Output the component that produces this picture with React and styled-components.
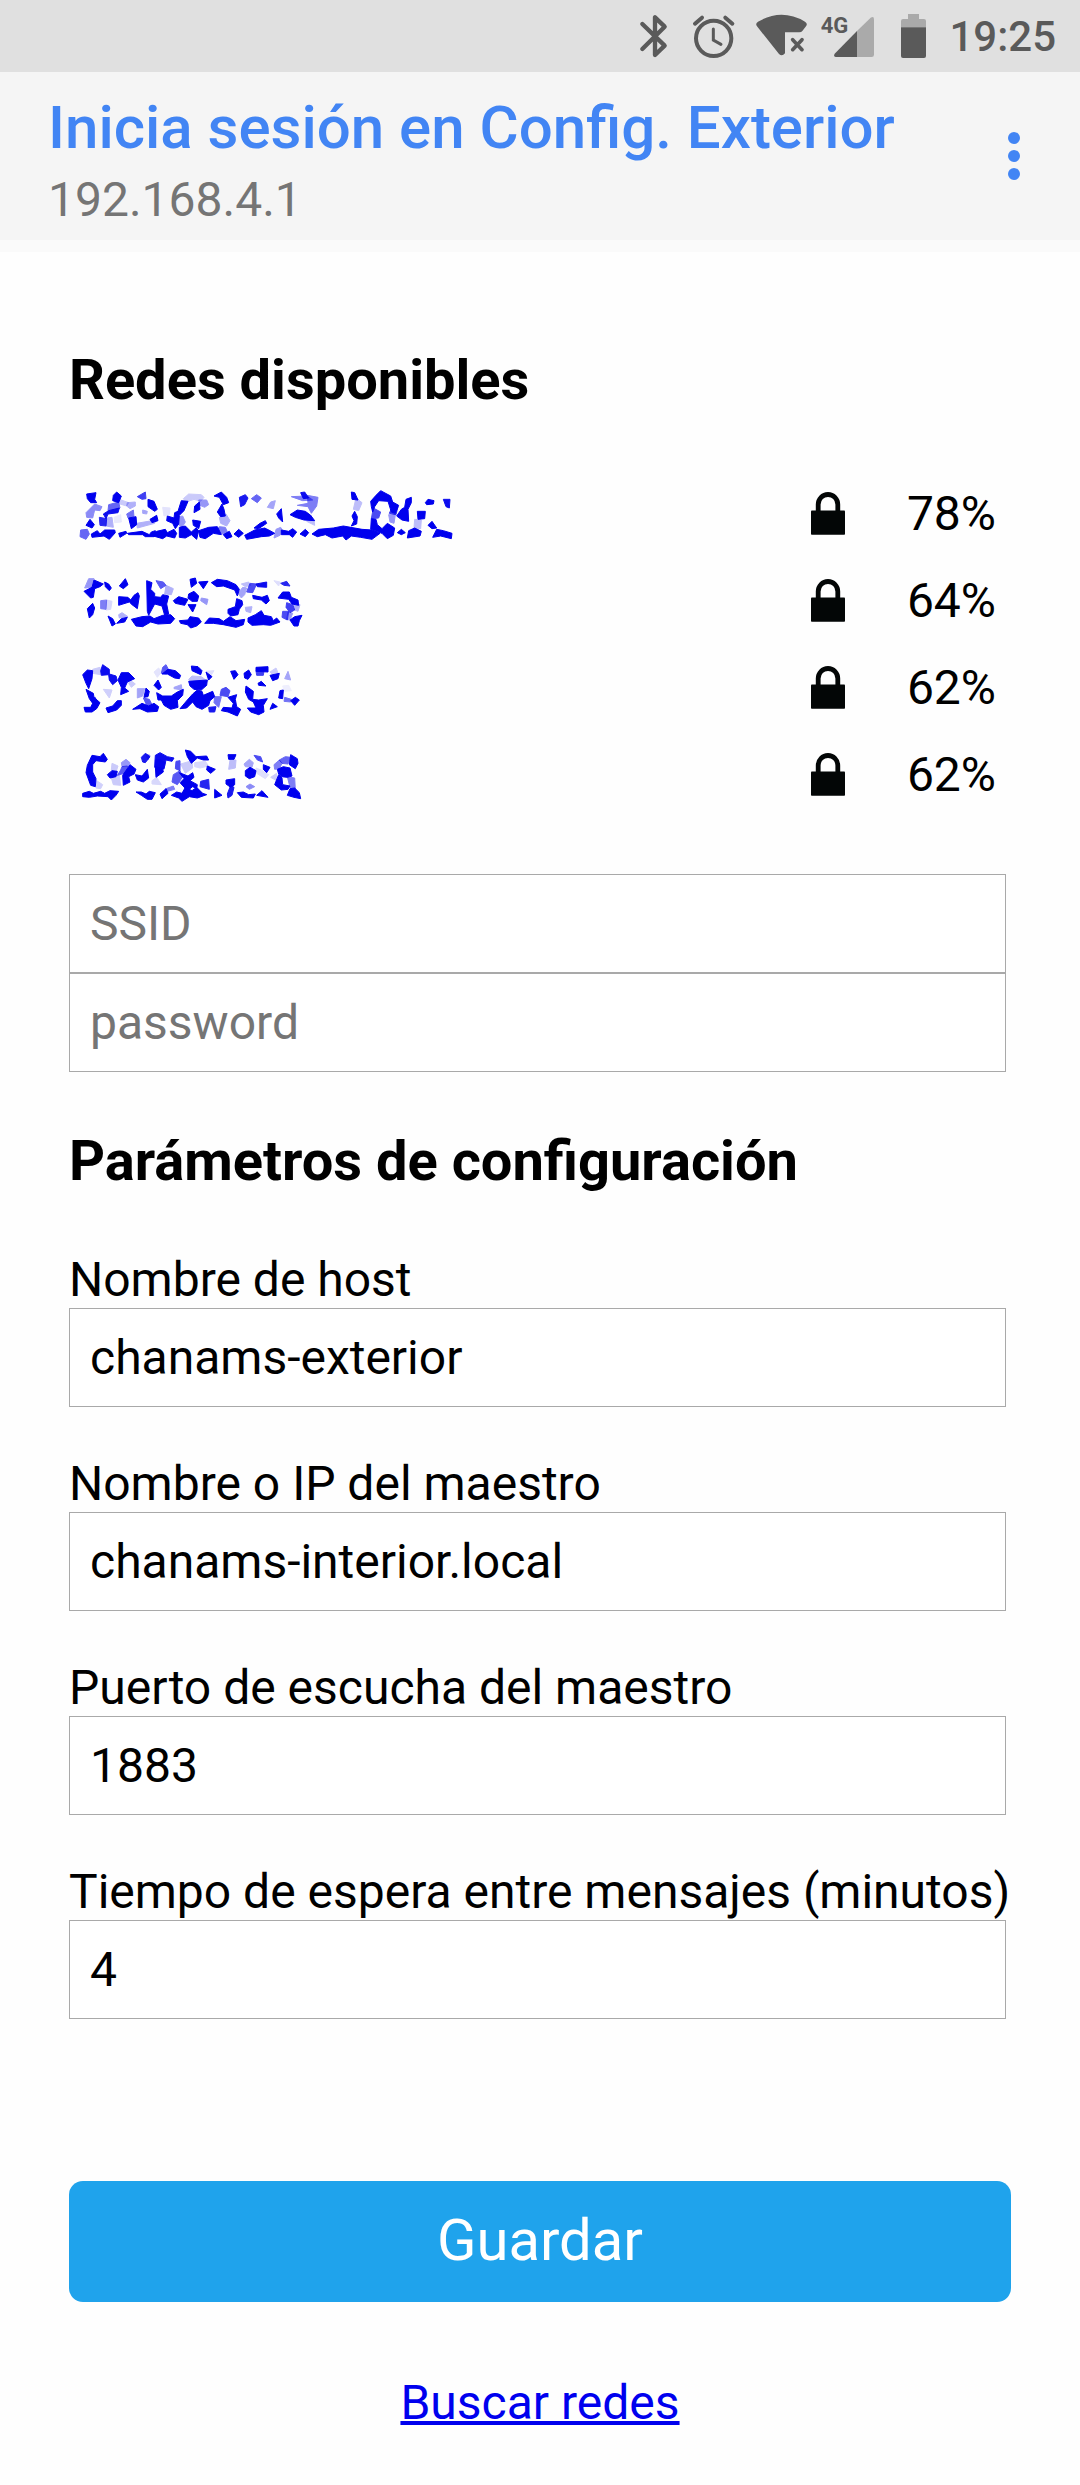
import React from "react";
import styled, { createGlobalStyle } from "styled-components";

const GlobalStyle = createGlobalStyle`
  *, *::before, *::after { box-sizing: border-box; }
  body {
    margin: 0;
    background: #fefefe;
    color: #000;
    font-family: Roboto, "Liberation Sans", sans-serif;
    font-size: 48px;
    line-height: 57px;
  }
`;

const StatusBar = styled.div`
  display: flex;
  align-items: center;
  justify-content: flex-end;
  gap: 12px;
  height: 72px;
  padding-right: 24px;
  background: #e0e0e0;
  color: #5a5a5a;
`;

const StatusIcon = styled.svg`
  flex: none;
  height: 72px;
  fill: currentColor;
`;

const Clock = styled.time`
  padding-top: 2px;
  font-size: 42px;
  font-weight: 500;
  line-height: 50px;
`;

const AppBar = styled.header`
  display: flex;
  align-items: center;
  justify-content: space-between;
  height: 180px;
  padding: 0 42px 0 48px;
  background: #f5f5f5;
  border-bottom: 12px solid #fafafa;
`;

const Titles = styled.div`
  display: flex;
  flex-direction: column;
  gap: 8px;
  padding-top: 8px;
`;

const Title = styled.h1`
  margin: 0;
  color: #4285f4;
  font-size: 60px;
  font-weight: 500;
  line-height: 70px;
`;

const Address = styled.span`
  color: #757575;
`;

const MenuButton = styled.button`
  display: flex;
  flex-direction: column;
  align-items: center;
  gap: 6px;
  width: 48px;
  padding: 24px 0;
  border: 0;
  background: none;
`;

const Dot = styled.span`
  width: 12px;
  height: 12px;
  border-radius: 50%;
  background: #4285f4;
`;

const Page = styled.main`
  display: flex;
  flex-direction: column;
  gap: 56px;
  padding: 95px 69px 54px;
`;

const Heading = styled.h2`
  margin: 0;
  font-size: 56px;
  font-weight: 700;
  line-height: 67px;
`;

const NetworkList = styled.ul`
  margin: 0;
  padding: 0;
  list-style: none;
`;

const NetworkRow = styled.li`
  display: flex;
  align-items: center;
  height: 87px;
  padding-right: 15px;
`;

const NetworkLink = styled.a`
  display: block;
  height: 87px;
  margin-right: auto;
  color: #0000ee;
`;

const Mosaic = styled.svg`
  display: block;
  width: 391px;
  height: 87px;
  fill: currentColor;
  stroke: currentColor;
  stroke-width: 3;
  stroke-linejoin: round;
`;

const LockIcon = styled.svg`
  width: 34px;
  height: 43px;
  margin-right: 62px;
`;

const Form = styled.form`
  display: flex;
  flex-direction: column;
  gap: 56px;
`;

const Fields = styled.div`
  display: flex;
  flex-direction: column;
  gap: ${(p) => p.$gap}px;
  padding-right: 5px;
`;

const Field = styled.div`
  display: flex;
  flex-direction: column;
`;

const Label = styled.label`
  white-space: nowrap;
`;

const Input = styled.input`
  width: 100%;
  height: 99px;
  padding: 0 20px;
  border: 1px solid #a9a9a9;
  border-radius: 0;
  background: #fff;
  color: #000;
  font: inherit;

  &::placeholder {
    color: #757575;
    opacity: 1;
  }
`;

const Actions = styled.div`
  display: flex;
  flex-direction: column;
  align-items: center;
  gap: 72px;
  padding-top: 106px;
`;

const SaveButton = styled.button`
  width: 100%;
  height: 121px;
  padding: 0 0 2px;
  border: 0;
  border-radius: 14px;
  background: #1fa3ec;
  color: #fff;
  font-family: inherit;
  font-size: 58px;
  line-height: 115px;
`;

const ScanLink = styled.a`
  color: #0000ee;
  text-decoration-thickness: 4px;
`;

/* Shards of each scrambled network name: [points, opacity]. */
const networks = [
  {
    id: "red-1",
    signal: 78,
    top: 0,
    shards: [
      ["80,72 108,68 104,88 110,98 92,98 82,86", 1],
      ["104,102 126,110 120,122 104,120 98,144 80,142 78,128", 0.45],
      ["90,148 103,164 96,174 78,166", 1],
      ["62,180 82,178 88,192 78,208 60,200", 0.6],
      ["94,192 112,182 120,192 134,180 164,180 166,188 148,208 132,198 96,202", 1],
      ["118,142 140,146 138,168 120,166", 0.85],
      ["140,144 156,142 160,172 138,168", 0.3],
      ["170,66 184,78 176,98 158,92 160,76", 1],
      ["146,104 176,96 180,114 144,122", 0.6],
      ["146,122 178,114 174,128 144,132 138,146 130,132", 0.95],
      ["178,88 206,98 200,108 180,102", 0.2],
      ["162,142 182,134 184,156 164,158", 0.08],
      ["176,190 198,184 200,190 180,202", 1],
      ["232,80 256,66 258,86 246,88", 0.75],
      ["202,98 226,96 226,108 210,116 200,108", 0.3],
      ["200,132 220,120 222,140 204,144", 0.55],
      ["206,144 228,140 230,164 214,176", 1],
      ["230,160 288,150 284,160 232,174", 0.3],
      ["202,190 246,184 268,194 274,186 286,182 292,192 282,200 256,200 248,194 206,194", 1],
      ["264,88 282,94 292,118 284,124 264,110", 1],
      ["270,148 290,136 294,152 276,158", 1],
      ["248,120 262,124 260,132 248,130", 0.35],
      ["308,112 330,114 328,134 312,138", 0.1],
      ["364,92 384,94 372,122 358,136 356,162 346,176 338,160 320,152 322,138 342,144 344,128 354,124", 1],
      ["356,140 368,138 376,156 366,172 354,162", 0.4],
      ["280,198 290,184 316,178 322,188 342,178 350,190 344,204 320,198 308,206", 1],
      ["370,86 386,72 424,74 432,82 422,94 402,88 378,96", 0.2],
      ["416,90 440,90 446,104 434,112 420,106", 0.4],
      ["404,108 418,96 420,118 402,128", 1],
      ["398,150 422,154 416,176 400,166", 1],
      ["358,172 376,168 394,186 408,174 416,182 410,208 394,194 376,204 358,202", 1],
      ["416,182 446,172 472,170 484,194 460,190 436,206 420,202", 1],
      ["462,78 484,66 500,82 506,98 490,104 478,82", 1],
      ["486,102 492,118 496,138 482,140 472,126", 1],
      ["478,142 498,132 510,152 500,168 482,160", 0.3],
      ["478,170 496,172 504,190 492,192 470,188", 0.5],
      ["490,194 508,184 516,200 500,206", 1],
      ["538,82 556,74 564,84 554,104 542,110", 0.9],
      ["574,86 590,74 604,84 592,98", 0.6],
      ["522,192 536,178 550,190 536,202", 1],
      ["616,152 620,160 596,176 582,174 600,160", 1],
      ["554,196 584,180 614,174 630,182 644,190 628,198 604,200 560,208", 1],
      ["632,96 646,92 640,116 622,112", 0.35],
      ["650,132 664,116 668,156 656,144", 1],
      ["648,178 662,172 668,182 660,196 642,204", 0.4],
      ["664,180 686,184 698,176 710,186 698,202 688,194 664,194", 1],
      ["690,134 712,120 736,124 752,136 764,152 732,150 706,142", 1],
      ["694,80 742,78 758,90 728,92", 0.5],
      ["722,68 734,66 746,84 730,86", 0.95],
      ["742,76 774,82 770,108 754,130 744,110 712,106 744,100", 0.5],
      ["740,154 762,150 764,166", 0.25],
      ["720,192 736,178 746,188 736,200", 1],
      ["756,192 776,178 820,174 850,168 906,178 936,180 960,190 936,208 902,202 874,198 858,210 848,198 816,204 796,194 772,200", 1],
      ["874,66 884,68 894,90 876,88", 1],
      ["888,84 906,98 896,122 880,118", 0.25],
      ["884,124 892,140 890,162 874,168 882,152 876,138", 1],
      ["932,94 948,76 962,62 992,78 998,96 1016,106 1006,130 994,126 984,94 956,92 944,110 938,126 934,110", 1],
      ["940,114 962,126 956,144 934,146", 0.7],
      ["934,146 948,148 952,164 966,176 982,160 1004,174 1000,196 982,206 966,190 932,178", 1],
      ["1000,104 1014,110 1008,134 988,130", 0.8],
      ["986,134 1006,134 1002,160 990,156", 0.4],
      ["1038,88 1054,82 1054,98 1044,118 1046,154 1026,150 1010,138 1024,118 1034,112", 1],
      ["1072,124 1096,124 1094,146 1074,148", 1],
      ["1064,148 1084,150 1082,176 1062,174", 0.25],
      ["1096,98 1104,88 1122,92 1120,102 1100,104", 1],
      ["1150,88 1170,88 1168,114 1158,110", 0.95],
      ["1012,188 1024,178 1036,188 1024,194", 1],
      ["1046,182 1064,174 1084,184 1080,198 1042,204", 1],
      ["1104,166 1116,154 1130,174 1116,176", 1],
      ["1130,178 1150,182 1176,190 1174,206 1142,198 1118,202", 1],
    ],
  },
  {
    id: "red-2",
    signal: 64,
    top: 261,
    shards: [
      ["86,326 102,326 96,352 74,354", 0.4],
      ["102,330 130,342 120,350 104,356 100,382 92,384 72,364 96,352", 1],
      ["98,400 104,414 98,434 88,444 82,416", 1],
      ["134,336 146,342 154,354 148,362 136,350", 1],
      ["122,392 140,390 138,418 122,416", 0.5],
      ["140,390 156,394 152,418 138,420", 0.15],
      ["176,434 186,428 204,440 178,444", 0.3],
      ["144,438 158,446 166,462 156,468", 1],
      ["196,326 204,344 190,356 178,348", 1],
      ["176,380 204,382 212,390 222,376 234,368 238,378 232,416 216,404 208,396 176,406", 1],
      ["170,460 184,446 202,442 194,456", 1],
      ["260,332 276,338 272,358 284,370 284,380 302,382 308,374 326,378 320,402 326,432 314,436 306,408 284,402 266,436 262,424", 1],
      ["288,332 310,336 318,346 302,356", 0.65],
      ["318,346 340,356 334,374 314,372", 0.3],
      ["214,448 246,440 270,438 282,446 308,436 332,434 344,446 332,460 294,462 272,456 248,470 228,468", 1],
      ["340,392 356,380 384,388 374,406 346,400", 1],
      ["390,328 406,324 410,340 394,352", 1],
      ["416,336 444,334 430,356", 1],
      ["386,372 402,364 416,378 412,394 396,394 384,384", 1],
      ["424,384 444,388 440,404 422,392", 0.4],
      ["384,404 408,404 398,426", 1],
      ["358,452 384,450 390,440 416,444 424,456 410,468 392,474 382,464 362,460", 1],
      ["454,338 472,328 502,332 528,344 538,358 532,378 524,360 490,348 470,350", 1],
      ["530,386 546,392 548,404 538,418 534,434 512,438 504,430 504,418 526,410", 1],
      ["534,370 548,352 560,354 554,374 544,384", 0.35],
      ["434,460 448,444 478,446 490,454 510,440 528,452 554,448 550,464 528,472 490,464 460,460", 1],
      ["570,340 590,342 578,368 560,366", 0.7],
      ["588,342 620,336 620,352 592,350", 0.95],
      ["544,342 566,336 572,346 556,350", 0.25],
      ["578,376 606,382 622,376 628,392 618,402 604,390 580,386", 1],
      ["556,412 576,410 572,428 558,424", 0.3],
      ["604,422 612,436 634,440 640,452 650,444 660,456 632,466 610,464 576,466 564,456 564,444 586,434", 1],
      ["642,332 660,336 656,348", 0.12],
      ["662,340 680,334 690,348 672,346", 0.85],
      ["654,384 668,366 688,366 694,382 714,390 716,406 696,402 686,388", 1],
      ["680,398 698,404 704,420 690,428 678,412", 0.75],
      ["700,406 720,404 714,424 704,420", 0.3],
      ["668,424 686,424 682,450 666,442", 0.7],
      ["684,426 698,430 690,450 680,448", 0.4],
      ["690,450 704,440 726,436 718,452 714,468 702,468", 1],
    ],
  },
  {
    id: "red-3",
    signal: 62,
    top: 12,
    shards: [
      ["68,104 82,90 98,92 96,116 86,146 78,130", 1],
      ["98,88 120,82 122,104 98,100", 0.2],
      ["122,92 128,74 148,88 148,102 168,108 172,122 158,134 148,120 146,104 124,106", 0.95],
      ["78,148 100,160 102,172 120,188 110,206 96,216 76,216 72,202 92,202 98,190 88,176", 1],
      ["92,174 106,172 112,190 100,194", 0.65],
      ["130,148 156,150 148,174", 0.18],
      ["138,204 158,198 172,182 184,182 184,196 170,210 144,218", 1],
      ["174,120 184,98 206,98 224,116 202,126 194,144 206,154 182,164 184,142", 1],
      ["210,120 226,132 214,142 206,130", 0.2],
      ["232,146 254,146 248,168 232,174", 0.35],
      ["258,144 268,154 264,170 252,172", 1],
      ["250,174 268,178 276,194 264,204", 0.65],
      ["218,208 246,190 266,198 282,190 296,200 292,214 262,216 240,206", 1],
      ["282,96 296,84 304,96 292,112", 0.1],
      ["308,82 318,74 324,86 320,102 304,100", 0.65],
      ["324,88 346,92 362,106 358,116 344,114 322,102 306,102", 1],
      ["282,136 294,120 304,142 296,150", 1],
      ["342,142 364,134 366,150 342,146", 0.35],
      ["290,158 308,168 334,168 352,156 370,148 368,166 352,182 354,202 332,208 312,196 304,180 294,180", 1],
      ["394,78 414,80 426,92 422,104 396,92", 1],
      ["386,118 396,108 424,110 440,122 392,124", 0.25],
      ["386,124 442,120 440,136 424,150 402,148 390,138", 1],
      ["438,94 462,92 452,108 444,124", 0.12],
      ["438,96 456,110 446,120", 1],
      ["360,206 382,180 398,162 412,150 426,154 430,166 458,154 464,170 450,182 446,196 426,208 408,200 398,186 380,204", 1],
      ["464,170 484,170 476,202 462,188", 0.55],
      ["484,148 498,142 510,152 504,170 480,166", 0.7],
      ["446,202 468,200 464,216 448,216", 0.9],
      ["504,172 530,164 526,178 530,200 542,208 532,228 504,216 484,212 490,202 516,204 520,190", 1],
      ["512,94 526,92 534,104 522,118", 1],
      ["552,100 566,90 574,104 564,118 554,114", 1],
      ["588,82 624,80 624,96 588,94", 1],
      ["588,92 612,92 610,106 590,106", 0.75],
      ["630,96 648,84 654,98 636,102", 0.2],
      ["630,106 658,100 654,116 638,122", 1],
      ["594,130 604,124 618,138 596,136", 1],
      ["558,138 580,154 578,178 596,180 622,176 610,196 612,216 596,224 572,216 562,204 588,204 580,186 566,178 556,156", 1],
      ["684,94 692,120 674,116", 0.35],
      ["660,152 670,150 668,176 656,174", 1],
      ["674,172 694,178 692,186 672,184", 0.55],
      ["692,182 706,172 718,180 704,196", 1],
      ["638,190 652,200 630,208", 1],
      ["668,138 686,136 694,152 674,154", 0.06],
    ],
  },
  {
    id: "red-4",
    signal: 62,
    top: 273,
    shards: [
      ["96,346 120,350 130,340 142,358 136,366 108,362 98,374 98,396 108,416 106,440 92,436 78,398 82,376", 1],
      ["110,422 128,434 122,446 108,444", 0.18],
      ["68,460 88,454 100,460 122,454 134,460 150,452 176,454 168,466 154,480 144,470 112,468 88,472 68,470", 1],
      ["156,370 174,378 168,396 154,390", 0.2],
      ["142,404 156,392 172,394 168,410 150,414", 1],
      ["154,414 178,404 182,436 160,434", 0.2],
      ["184,368 198,358 210,368 206,378 186,380", 0.4],
      ["186,380 202,378 206,396 172,406 182,390", 0.65],
      ["210,374 228,388 222,402 206,410 210,426 190,436 188,406", 1],
      ["244,352 256,340 270,350 256,368 248,366", 0.9],
      ["258,342 270,346 264,360", 0.4],
      ["226,404 246,408 262,388 266,414 250,426 232,420", 1],
      ["276,422 290,412 304,434 276,432", 0.15],
      ["228,456 244,456 258,462 268,454 286,458 276,478 262,478 244,466", 1],
      ["286,346 300,338 322,350 342,354 336,364 318,360 312,386 284,382", 0.95],
      ["286,360 302,360 316,368 312,388 286,380", 0.5],
      ["286,380 308,386 310,396 288,412", 1],
      ["300,462 318,446 324,460 306,476", 1],
      ["318,446 340,438 344,448 322,454", 0.5],
      ["348,364 360,362 360,392 346,386", 0.7],
      ["362,372 396,362 398,384 376,400", 0.2],
      ["376,330 392,334 408,350 440,348 446,360 430,360 412,354 394,370 382,350", 1],
      ["404,368 436,364 446,378 420,384 404,380", 0.15],
      ["340,404 360,392 368,410 352,434 336,426", 0.65],
      ["358,398 384,408 398,398 402,412 390,422 412,434 410,446 398,440 382,452 360,428 372,416", 1],
      ["422,424 446,418 448,448 420,440", 0.85],
      ["334,466 350,456 366,460 376,442 396,452 410,442 428,460 440,464 412,474 388,470 366,484 356,474", 1],
      ["442,378 466,388 452,400 440,390", 1],
      ["464,448 486,466 464,474", 1],
      ["504,344 528,344 522,358 506,358", 1],
      ["510,360 528,360 526,384 506,388", 0.25],
      ["498,420 524,416 524,434 512,442 498,432", 1],
      ["512,436 522,442 516,466 504,474 502,462", 0.9],
      ["582,346 602,350 608,366 592,360", 0.7],
      ["552,372 568,358 580,368 576,382 556,380", 0.35],
      ["556,392 570,382 588,392 584,410 568,416 556,408", 1],
      ["610,374 630,382 620,398 610,388", 1],
      ["588,384 608,392 626,404 616,416 590,400", 0.12],
      ["558,440 570,432 584,440 568,448", 0.45],
      ["532,458 550,456 566,464 586,462 580,474 544,472", 1],
      ["590,466 606,452 624,472", 1],
      ["642,374 658,360 666,370 658,386 644,388", 0.5],
      ["658,360 676,350 692,352 684,372 666,370", 0.6],
      ["692,344 712,356 714,370 706,386 688,374", 1],
      ["652,388 670,380 690,384 696,408 682,412 664,410 656,402", 1],
      ["644,434 656,404 666,414 668,434 690,438 684,448 664,450", 1],
      ["632,412 650,400 650,422", 0.2],
      ["682,410 704,414 706,448 690,442", 0.5],
      ["690,446 704,444 718,458 722,476 702,472 682,466", 1],
    ],
  },
];

const settings = [
  { id: "hostname", label: "Nombre de host", value: "chanams-exterior" },
  { id: "master", label: "Nombre o IP del maestro", value: "chanams-interior.local" },
  { id: "port", label: "Puerto de escucha del maestro", value: "1883" },
  { id: "interval", label: "Tiempo de espera entre mensajes (minutos)", value: "4" },
];

const Lock = () => (
  <LockIcon viewBox="0 0 34 43" aria-hidden="true">
    <path d="M7.2 20V12.5a9.8 10 0 0 1 19.6 0V20" fill="none" stroke="#030606" strokeWidth="4.8" />
    <rect y="18.6" width="34" height="24.2" rx="0.8" fill="#030606" />
  </LockIcon>
);

const StatusIcons = () => (
  <>
    <StatusIcon width="41" viewBox="108 0 123 216" aria-hidden="true">
      <path
        d="M127 147L194 80L165 52V165L194 137L127 72"
        fill="none"
        stroke="currentColor"
        strokeWidth="13"
        strokeLinecap="round"
        strokeLinejoin="round"
      />
    </StatusIcon>
    <StatusIcon width="49" viewBox="267 0 147 216" aria-hidden="true">
      <g fill="none" stroke="currentColor" strokeLinecap="round">
        <circle cx="341" cy="115" r="53" strokeWidth="12" />
        <path d="M340 87V120L363 133" strokeWidth="9" />
        <path d="M285 71L306 53M376 53L397 71" strokeWidth="12" />
      </g>
    </StatusIcon>
    <StatusIcon width="59" viewBox="450 0 177 216" aria-hidden="true">
      <path d="M471 79Q465 71 474 65Q545 24 615 65Q624 71 618 79L607 93Q604 97 598 97H555V160Q546 171 537 162Z" />
      <path d="M578 119L606 149M606 119L578 149" fill="none" stroke="currentColor" strokeWidth="11" strokeLinecap="round" />
    </StatusIcon>
    <StatusIcon width="56" viewBox="663 0 168 216" aria-hidden="true">
      <path d="M771 93L812 53Q822 48 822 58V164Q822 171 815 171H771Z" fill="#aaa" />
      <path d="M771 93V171H708Q699 169 704 161Z" />
      <text x="662" y="100" fontSize="66" fontWeight="700">4G</text>
    </StatusIcon>
    <StatusIcon width="48" viewBox="867 0 144 216" aria-hidden="true">
      <path d="M924 42H957V57H972Q978 57 978 63V82H903V63Q903 57 909 57H924Z" fill="#aaa" />
      <path d="M903 82H978V168Q978 174 972 174H909Q903 174 903 168Z" />
    </StatusIcon>
  </>
);

export default function App() {
  return (
    <>
      <GlobalStyle />
      <StatusBar>
        <StatusIcons />
        <Clock>19:25</Clock>
      </StatusBar>
      <AppBar>
        <Titles>
          <Title>Inicia sesión en Config. Exterior</Title>
          <Address>192.168.4.1</Address>
        </Titles>
        <MenuButton type="button" aria-label="Más opciones">
          <Dot />
          <Dot />
          <Dot />
        </MenuButton>
      </AppBar>
      <Page>
        <Heading>Redes disponibles</Heading>
        <NetworkList>
          {networks.map((network) => (
            <NetworkRow key={network.id}>
              <NetworkLink href={`#${network.id}`} aria-label="Red oculta">
                <Mosaic viewBox={`27 ${network.top} 1173 261`} aria-hidden="true">
                  {network.shards.map(([points, opacity]) => (
                    <polygon key={points} points={points} opacity={opacity} />
                  ))}
                </Mosaic>
              </NetworkLink>
              <Lock />
              <span>{network.signal}%</span>
            </NetworkRow>
          ))}
        </NetworkList>
        <Form onSubmit={(event) => event.preventDefault()}>
          <Fields $gap={0}>
            <Input type="text" placeholder="SSID" aria-label="SSID" />
            <Input type="password" placeholder="password" aria-label="password" />
          </Fields>
          <Heading>Parámetros de configuración</Heading>
          <Fields $gap={48}>
            {settings.map((setting) => (
              <Field key={setting.id}>
                <Label htmlFor={setting.id}>{setting.label}</Label>
                <Input id={setting.id} type="text" defaultValue={setting.value} />
              </Field>
            ))}
          </Fields>
          <Actions>
            <SaveButton type="submit">Guardar</SaveButton>
            <ScanLink href="#buscar">Buscar redes</ScanLink>
          </Actions>
        </Form>
      </Page>
    </>
  );
}
